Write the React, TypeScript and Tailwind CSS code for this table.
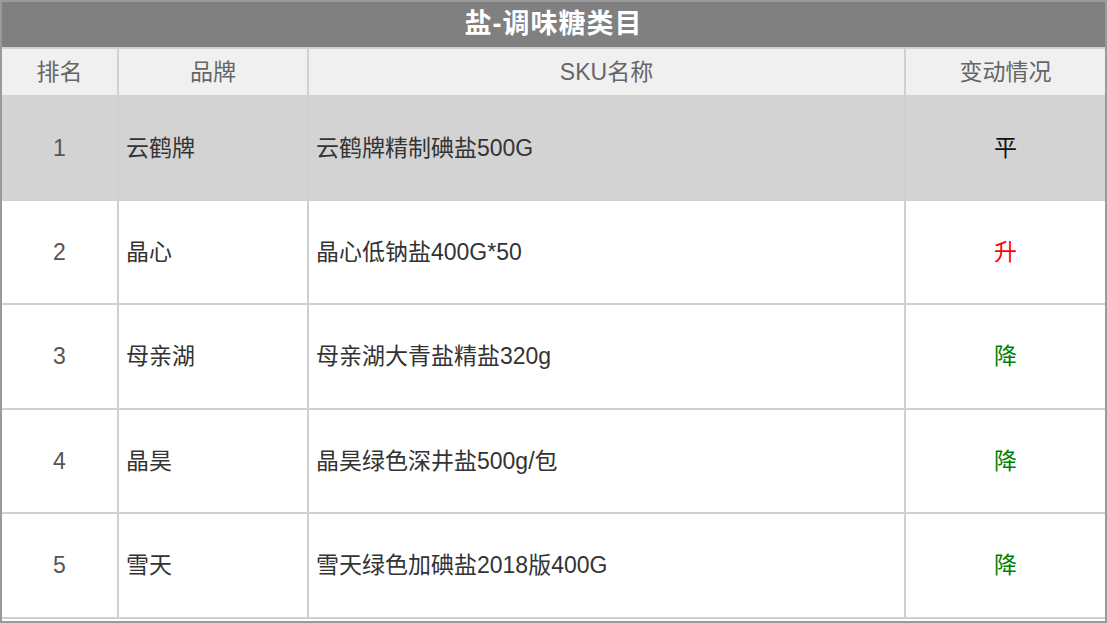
import React from 'react';

interface RankRow {
  rank: number;
  brand: string;
  sku: string;
  change: '平' | '升' | '降';
}

const rows: RankRow[] = [
  { rank: 1, brand: '云鹤牌', sku: '云鹤牌精制碘盐500G', change: '平' },
  { rank: 2, brand: '晶心', sku: '晶心低钠盐400G*50', change: '升' },
  { rank: 3, brand: '母亲湖', sku: '母亲湖大青盐精盐320g', change: '降' },
  { rank: 4, brand: '晶昊', sku: '晶昊绿色深井盐500g/包', change: '降' },
  { rank: 5, brand: '雪天', sku: '雪天绿色加碘盐2018版400G', change: '降' },
];

const changeColor = (c: string) => {
  if (c === '升') return 'text-[#ff0000]';
  if (c === '降') return 'text-[#008000]';
  return 'text-[#111111]';
};

const App: React.FC = () => {
  return (
    <div
      className="w-[1107px] h-[623px] bg-white border-2 border-[#9a9a9a] overflow-hidden"
      style={{ fontFamily: '"Liberation Sans", Tahoma, "Noto Sans CJK SC", sans-serif' }}
    >
      {/* Title */}
      <div className="h-[45px] bg-[#808080] flex items-center justify-center text-white font-bold text-[27px] tracking-[1px]">
        盐-调味糖类目
      </div>

      <table className="w-full border-collapse table-fixed">
        <colgroup>
          <col className="w-[116px]" />
          <col className="w-[190px]" />
          <col className="w-[597px]" />
          <col />
        </colgroup>
        <thead>
          <tr className="h-[48px] bg-[#f0f0f0] text-[#666666] text-[23px]">
            <th className="border-2 border-l-0 border-[#d0d0d0] font-normal">排名</th>
            <th className="border-2 border-[#d0d0d0] font-normal">品牌</th>
            <th className="border-2 border-[#d0d0d0] font-normal">SKU名称</th>
            <th className="border-2 border-r-0 border-[#d0d0d0] font-normal">变动情况</th>
          </tr>
        </thead>
        <tbody>
          {rows.map((row, i) => (
            <tr
              key={row.rank}
              className={`text-[23px] text-[#333333] ${i === 0 ? 'bg-[#d3d3d3]' : 'bg-white'} ${
                i === 2 || i === 4 ? 'h-[105px]' : 'h-[104px]'
              }`}
            >
              <td className="border-2 border-l-0 border-[#d0d0d0] text-center text-[#555555]">{row.rank}</td>
              <td className="border-2 border-[#d0d0d0] pl-[7px]">{row.brand}</td>
              <td className="border-2 border-[#d0d0d0] pl-[7px]">{row.sku}</td>
              <td className={`border-2 border-r-0 border-[#d0d0d0] text-center ${changeColor(row.change)}`}>
                {row.change}
              </td>
            </tr>
          ))}
        </tbody>
      </table>
    </div>
  );
};

export default App;
